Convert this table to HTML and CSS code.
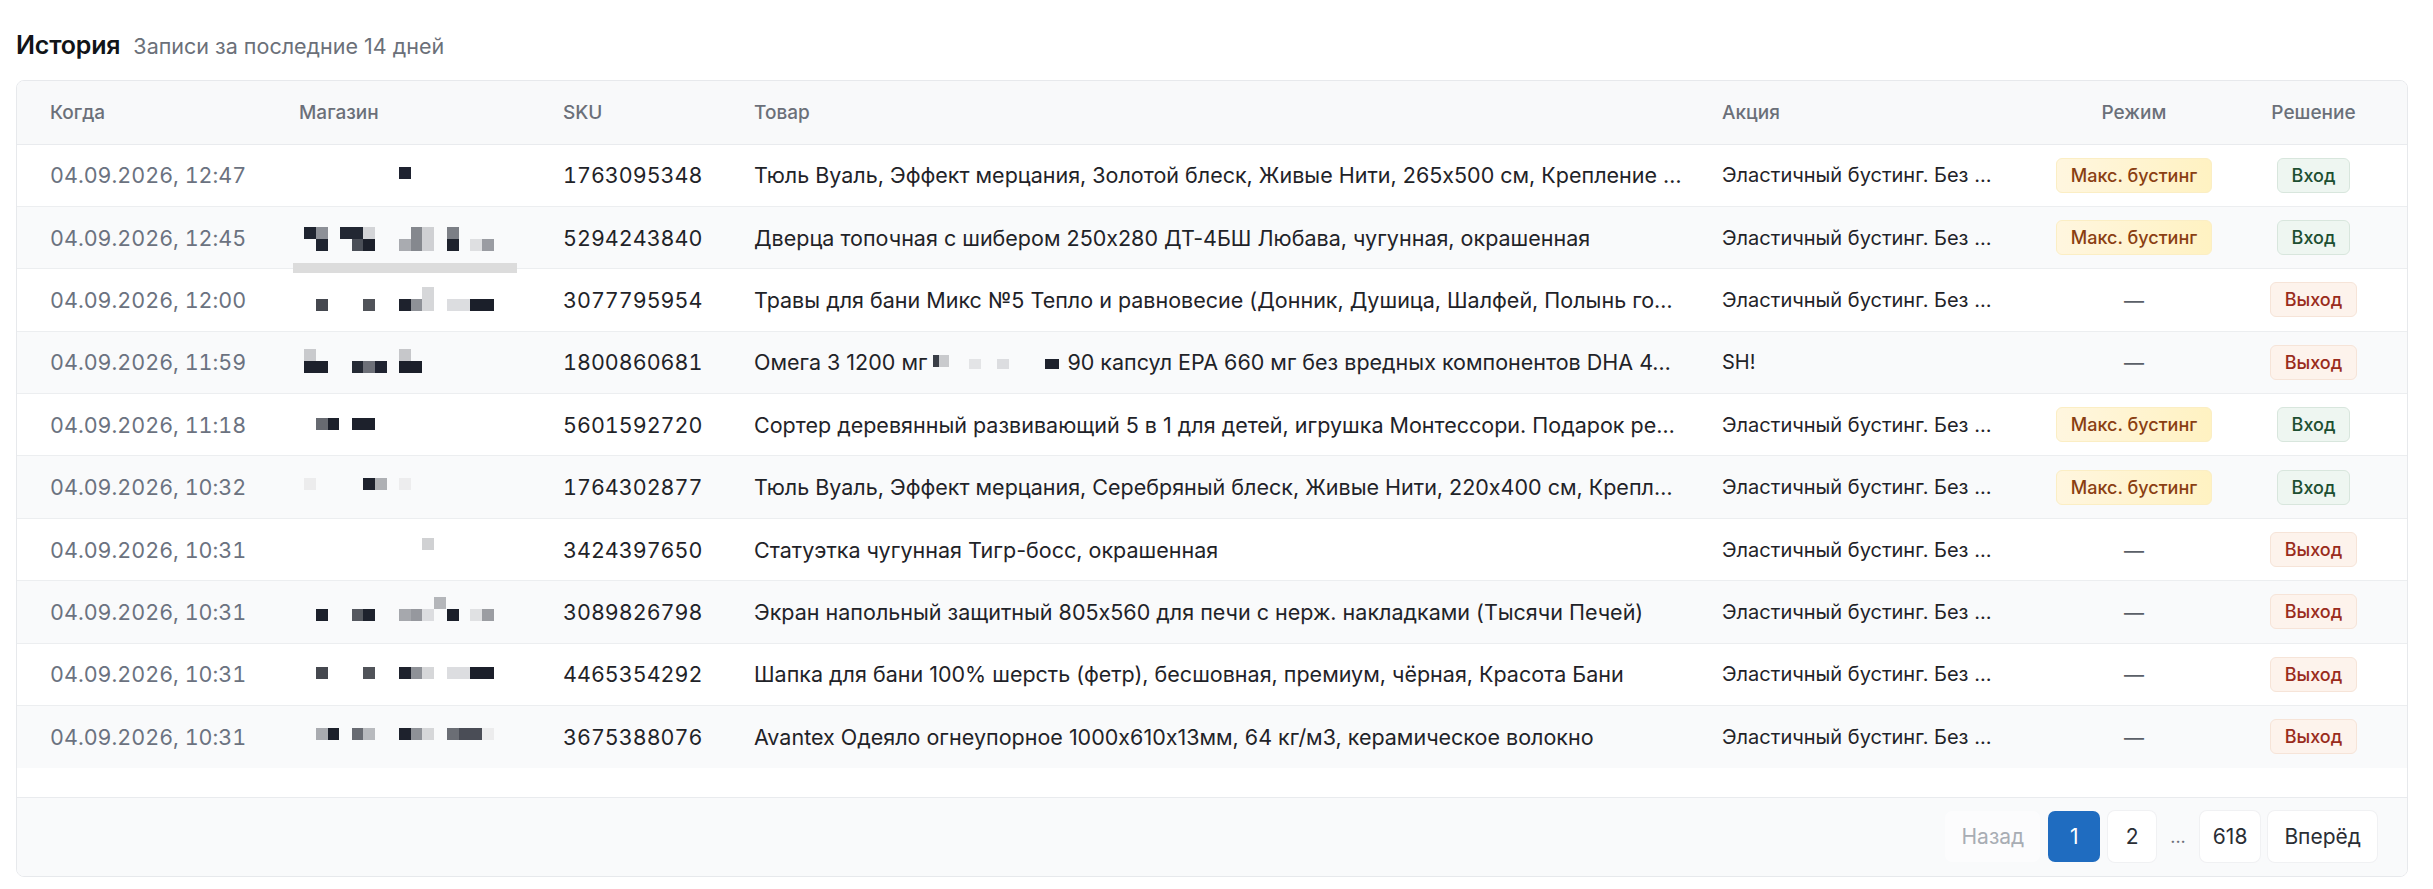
FILE: index.html
```html
<!DOCTYPE html>
<html lang="ru">
<head>
<meta charset="utf-8">
<title>История</title>
<link rel="stylesheet" href="styles.css">
</head>
<body>
<div class="page">
  <div class="heading">
    <h2 class="title">История</h2>
    <span class="subtitle">Записи за последние 14 дней</span>
  </div>
  <div class="card">
    <div class="table-wrap">
      <table class="grid">
        <colgroup>
          <col class="c-when"><col class="c-shop"><col class="c-sku"><col class="c-item"><col class="c-promo"><col class="c-mode"><col class="c-dec">
        </colgroup>
        <thead>
          <tr>
            <th>Когда</th><th>Магазин</th><th>SKU</th><th>Товар</th><th>Акция</th><th class="center">Режим</th><th class="center dec">Решение</th>
          </tr>
        </thead>
        <tbody>
          <tr>
            <td class="when">04.09.2026, 12:47</td>
            <td class="shop"><svg class="px" width="220" height="40" viewBox="0 0 220 40" shape-rendering="crispEdges"><rect x="100" y="12" width="12" height="12" fill="#1e2230"/></svg></td>
            <td class="sku">1763095348</td>
            <td class="item">Тюль Вуаль, Эффект мерцания, Золотой блеск, Живые Нити, 265x500 см, Крепление …</td>
            <td class="promo">Эластичный бустинг. Без …</td>
            <td class="center"><span class="badge max">Макс. бустинг</span></td>
            <td class="center dec"><span class="badge in">Вход</span></td>
          </tr>
          <tr>
            <td class="when">04.09.2026, 12:45</td>
            <td class="shop"><svg class="px" width="220" height="40" viewBox="0 0 220 40" shape-rendering="crispEdges">
              <rect x="5" y="9" width="12" height="12" fill="#1f2430"/><rect x="17" y="9" width="12" height="12" fill="#8d9097"/><rect x="17" y="21" width="12" height="12" fill="#1f2430"/>
              <rect x="41" y="9" width="23" height="12" fill="#222733"/><rect x="64" y="9" width="12" height="12" fill="#d3d4d7"/><rect x="53" y="21" width="11" height="12" fill="#4b4f58"/><rect x="64" y="21" width="12" height="12" fill="#1c202b"/>
              <rect x="100" y="21" width="12" height="12" fill="#a9abb0"/><rect x="112" y="9" width="11" height="24" fill="#85888e"/><rect x="123" y="9" width="12" height="24" fill="#cfd0d3"/>
              <rect x="148" y="9" width="12" height="12" fill="#7c7f86"/><rect x="148" y="21" width="12" height="12" fill="#1e222d"/>
              <rect x="171" y="21" width="12" height="12" fill="#dedfe1"/><rect x="183" y="21" width="12" height="12" fill="#9a9ca2"/>
            </svg><span class="bar"></span></td>
            <td class="sku">5294243840</td>
            <td class="item">Дверца топочная с шибером 250x280 ДТ-4БШ Любава, чугунная, окрашенная</td>
            <td class="promo">Эластичный бустинг. Без …</td>
            <td class="center"><span class="badge max">Макс. бустинг</span></td>
            <td class="center dec"><span class="badge in">Вход</span></td>
          </tr>
          <tr>
            <td class="when">04.09.2026, 12:00</td>
            <td class="shop"><svg class="px" width="220" height="40" viewBox="0 0 220 40" shape-rendering="crispEdges">
              <rect x="17" y="19" width="12" height="12" fill="#45484f"/><rect x="64" y="19" width="12" height="12" fill="#505359"/>
              <rect x="100" y="19" width="12" height="12" fill="#1e222d"/><rect x="112" y="19" width="11" height="12" fill="#8e9197"/><rect x="123" y="7" width="12" height="24" fill="#d6d7d9"/>
              <rect x="148" y="19" width="23" height="12" fill="#dcdde0"/><rect x="171" y="19" width="24" height="12" fill="#1b1f2a"/>
            </svg></td>
            <td class="sku">3077795954</td>
            <td class="item">Травы для бани Микс №5 Тепло и равновесие (Донник, Душица, Шалфей, Полынь го…</td>
            <td class="promo">Эластичный бустинг. Без …</td>
            <td class="center"><span class="dash">—</span></td>
            <td class="center dec"><span class="badge out">Выход</span></td>
          </tr>
          <tr>
            <td class="when">04.09.2026, 11:59</td>
            <td class="shop"><svg class="px" width="220" height="40" viewBox="0 0 220 40" shape-rendering="crispEdges">
              <rect x="5" y="7" width="12" height="12" fill="#c9cacd"/><rect x="5" y="19" width="24" height="12" fill="#1d212c"/>
              <rect x="53" y="19" width="11" height="12" fill="#252a35"/><rect x="64" y="19" width="12" height="12" fill="#6d7078"/><rect x="76" y="19" width="12" height="12" fill="#1f2330"/>
              <rect x="100" y="7" width="12" height="12" fill="#c6c7ca"/><rect x="100" y="19" width="23" height="12" fill="#1b1f2a"/>
            </svg></td>
            <td class="sku">1800860681</td>
            <td class="item">Омега 3 1200 мг <svg class="px inline" width="128" height="20" viewBox="0 0 128 20" shape-rendering="crispEdges"><rect x="0" y="2" width="6" height="12" fill="#3a3e47"/><rect x="6" y="2" width="10" height="12" fill="#c9cacd"/><rect x="36" y="6" width="12" height="10" fill="#e3e4e6"/><rect x="64" y="6" width="12" height="10" fill="#dcdde0"/><rect x="112" y="6" width="14" height="10" fill="#1e222d"/></svg> 90 капсул EPA 660 мг без вредных компонентов DHA 4…</td>
            <td class="promo">SH!</td>
            <td class="center"><span class="dash">—</span></td>
            <td class="center dec"><span class="badge out">Выход</span></td>
          </tr>
          <tr>
            <td class="when">04.09.2026, 11:18</td>
            <td class="shop"><svg class="px" width="220" height="40" viewBox="0 0 220 40" shape-rendering="crispEdges">
              <rect x="17" y="13" width="12" height="12" fill="#676a71"/><rect x="29" y="13" width="11" height="12" fill="#1c202b"/>
              <rect x="53" y="13" width="23" height="12" fill="#1d212c"/>
            </svg></td>
            <td class="sku">5601592720</td>
            <td class="item">Сортер деревянный развивающий 5 в 1 для детей, игрушка Монтессори. Подарок ре…</td>
            <td class="promo">Эластичный бустинг. Без …</td>
            <td class="center"><span class="badge max">Макс. бустинг</span></td>
            <td class="center dec"><span class="badge in">Вход</span></td>
          </tr>
          <tr>
            <td class="when">04.09.2026, 10:32</td>
            <td class="shop"><svg class="px" width="220" height="40" viewBox="0 0 220 40" shape-rendering="crispEdges">
              <rect x="5" y="11" width="12" height="12" fill="#ececed"/><rect x="64" y="11" width="12" height="12" fill="#1e222d"/><rect x="76" y="11" width="12" height="12" fill="#aeb0b4"/><rect x="100" y="11" width="12" height="12" fill="#ededee"/>
            </svg></td>
            <td class="sku">1764302877</td>
            <td class="item">Тюль Вуаль, Эффект мерцания, Серебряный блеск, Живые Нити, 220x400 см, Крепл…</td>
            <td class="promo">Эластичный бустинг. Без …</td>
            <td class="center"><span class="badge max">Макс. бустинг</span></td>
            <td class="center dec"><span class="badge in">Вход</span></td>
          </tr>
          <tr>
            <td class="when">04.09.2026, 10:31</td>
            <td class="shop"><svg class="px" width="220" height="40" viewBox="0 0 220 40" shape-rendering="crispEdges">
              <rect x="123" y="8" width="12" height="12" fill="#d0d1d3"/>
            </svg></td>
            <td class="sku">3424397650</td>
            <td class="item">Статуэтка чугунная Тигр-босс, окрашенная</td>
            <td class="promo">Эластичный бустинг. Без …</td>
            <td class="center"><span class="dash">—</span></td>
            <td class="center dec"><span class="badge out">Выход</span></td>
          </tr>
          <tr>
            <td class="when">04.09.2026, 10:31</td>
            <td class="shop"><svg class="px" width="220" height="40" viewBox="0 0 220 40" shape-rendering="crispEdges">
              <rect x="17" y="17" width="12" height="12" fill="#1c202b"/><rect x="53" y="17" width="11" height="12" fill="#55585f"/><rect x="64" y="17" width="12" height="12" fill="#1e222d"/>
              <rect x="100" y="17" width="12" height="12" fill="#a6a8ad"/><rect x="112" y="17" width="11" height="12" fill="#96989e"/><rect x="123" y="17" width="12" height="12" fill="#dcdde0"/><rect x="135" y="5" width="12" height="12" fill="#b4b6ba"/>
              <rect x="148" y="17" width="12" height="12" fill="#1b1f2a"/><rect x="171" y="17" width="12" height="12" fill="#e0e1e3"/><rect x="183" y="17" width="12" height="12" fill="#9b9da2"/>
            </svg></td>
            <td class="sku">3089826798</td>
            <td class="item">Экран напольный защитный 805x560 для печи с нерж. накладками (Тысячи Печей)</td>
            <td class="promo">Эластичный бустинг. Без …</td>
            <td class="center"><span class="dash">—</span></td>
            <td class="center dec"><span class="badge out">Выход</span></td>
          </tr>
          <tr>
            <td class="when">04.09.2026, 10:31</td>
            <td class="shop"><svg class="px" width="220" height="40" viewBox="0 0 220 40" shape-rendering="crispEdges">
              <rect x="17" y="13" width="12" height="12" fill="#45484f"/><rect x="64" y="13" width="12" height="12" fill="#505359"/>
              <rect x="100" y="13" width="12" height="12" fill="#1e222d"/><rect x="112" y="13" width="11" height="12" fill="#8e9197"/><rect x="123" y="13" width="12" height="12" fill="#d6d7d9"/>
              <rect x="148" y="13" width="23" height="12" fill="#dcdde0"/><rect x="171" y="13" width="24" height="12" fill="#1b1f2a"/>
            </svg></td>
            <td class="sku">4465354292</td>
            <td class="item">Шапка для бани 100% шерсть (фетр), бесшовная, премиум, чёрная, Красота Бани</td>
            <td class="promo">Эластичный бустинг. Без …</td>
            <td class="center"><span class="dash">—</span></td>
            <td class="center dec"><span class="badge out">Выход</span></td>
          </tr>
          <tr>
            <td class="when">04.09.2026, 10:31</td>
            <td class="shop"><svg class="px" width="220" height="40" viewBox="0 0 220 40" shape-rendering="crispEdges">
              <rect x="17" y="11" width="12" height="12" fill="#a9abb0"/><rect x="29" y="11" width="11" height="12" fill="#1c202b"/>
              <rect x="53" y="11" width="11" height="12" fill="#686b72"/><rect x="64" y="11" width="12" height="12" fill="#b8babe"/>
              <rect x="100" y="11" width="12" height="12" fill="#1e222d"/><rect x="112" y="11" width="11" height="12" fill="#8e9197"/><rect x="123" y="11" width="12" height="12" fill="#d6d7d9"/>
              <rect x="148" y="11" width="12" height="12" fill="#6b6e75"/><rect x="160" y="11" width="23" height="12" fill="#4a4d56"/><rect x="183" y="11" width="12" height="12" fill="#ececed"/>
            </svg></td>
            <td class="sku">3675388076</td>
            <td class="item">Avantex Одеяло огнеупорное 1000x610x13мм, 64 кг/м3, керамическое волокно</td>
            <td class="promo">Эластичный бустинг. Без …</td>
            <td class="center"><span class="dash">—</span></td>
            <td class="center dec"><span class="badge out">Выход</span></td>
          </tr>
        </tbody>
      </table>
    </div>
    <div class="footer">
      <nav class="pager">
        <span class="pbtn disabled">Назад</span>
        <span class="pbtn num active">1</span>
        <span class="pbtn num">2</span>
        <span class="ellipsis">...</span>
        <span class="pbtn num">618</span>
        <span class="pbtn">Вперёд</span>
      </nav>
    </div>
  </div>
</div>
</body>
</html>
```

FILE: styles.css
```css
* { box-sizing: border-box; }

html, body {
  margin: 0;
  padding: 0;
  background: #ffffff;
}

body {
  font-family: Inter, "Noto Sans", "Liberation Sans", sans-serif;
  font-feature-settings: "calt" 0;
  color: #1f2328;
}

.page {
  padding: 30px 25px 0 16px;
}

.heading {
  display: flex;
  align-items: baseline;
  gap: 13px;
  height: 34px;
}

.title {
  margin: 0;
  font-size: 25px;
  font-weight: 600;
  color: #111418;
  letter-spacing: -0.2px;
}

.subtitle {
  font-size: 21.5px;
  color: #6b7079;
}

.card {
  margin-top: 16px;
  border: 1px solid #e7e9ec;
  border-radius: 8px;
  overflow: hidden;
  background: #fff;
}

.table-wrap {
  padding-bottom: 29px;
}

.grid {
  width: 100%;
  border-collapse: collapse;
  table-layout: fixed;
  font-size: 21.5px;
}

.c-when { width: 249px; }
.c-shop { width: 264px; }
.c-sku { width: 191px; }
.c-item { width: 968px; }
.c-promo { width: 345px; }
.c-mode { width: 200px; }

th {
  height: 63px;
  background: #f8f9fa;
  font-size: 19px;
  font-weight: 500;
  color: #6b7079;
  text-align: left;
  padding: 0 4px 0 33px;
  border-bottom: 1px solid #e9ebee;
}

td {
  height: 62.4px;
  padding: 0 4px 0 33px;
  border-bottom: 1px solid #eceef0;
  white-space: nowrap;
  overflow: hidden;
  text-overflow: ellipsis;
  vertical-align: middle;
  color: #1f2328;
}

tbody tr:nth-child(even) td { background: #f9fafb; }
tbody tr:last-child td { border-bottom: none; }

td.when, td.sku {
  font-variant-numeric: tabular-nums;
  overflow: visible;
  text-overflow: clip;
}

td.when { color: #6b7280; }

td.promo { font-size: 20px; padding-right: 33px; }

th.center, td.center {
  text-align: center;
  padding-left: 10px;
  padding-right: 10px;
  overflow: visible;
  text-overflow: clip;
}

th.dec, td.dec { padding-right: 26px; padding-left: 12px; }

td.shop {
  position: relative;
  overflow: visible;
}

.px { display: block; }
.px.inline { display: inline-block; vertical-align: -3px; }

.bar {
  position: absolute;
  left: 27px;
  width: 224px;
  bottom: -5px;
  height: 10px;
  background: #dcdcdc;
  z-index: 2;
}

.badge {
  display: inline-block;
  font-size: 18px;
  font-weight: 500;
  line-height: 33px;
  height: 35px;
  padding: 0 14px;
  border-radius: 6px;
  border: 1px solid transparent;
}

.badge.max {
  background: linear-gradient(90deg, #fff6df, #fff2c2);
  border-color: #fbeec4;
  color: #8a3f12;
}

.badge.in {
  background: #eef6f1;
  border-color: #d8e6dd;
  color: #1d4f31;
}

.badge.out {
  background: #fdf3ec;
  border-color: #f6e4d8;
  color: #9a2c1c;
}

.dash {
  color: #5b6068;
  font-size: 20px;
}

.footer {
  height: 79px;
  border-top: 1px solid #e9ebee;
  background: #f9fafb;
  display: flex;
  align-items: center;
  justify-content: flex-end;
  padding-right: 30px;
}

.pager {
  display: flex;
  align-items: center;
  gap: 8px;
}

.pbtn {
  display: inline-flex;
  align-items: center;
  justify-content: center;
  height: 51px;
  padding: 0 16px;
  background: #fff;
  border-radius: 7px;
  font-size: 21px;
  color: #2a2e35;
  box-shadow: 0 0 0 1px #f0f1f3;
}

.pbtn.num { min-width: 48px; padding: 0 13px; }

.pbtn.active {
  background: #1f6cc0;
  color: #fff;
  box-shadow: none;
  min-width: 52px;
}

.pbtn.disabled {
  color: #a8adb4;
  background: #fcfcfd;
  box-shadow: none;
}

.ellipsis {
  color: #6b7079;
  font-size: 18px;
  padding: 0 6px;
}
```
